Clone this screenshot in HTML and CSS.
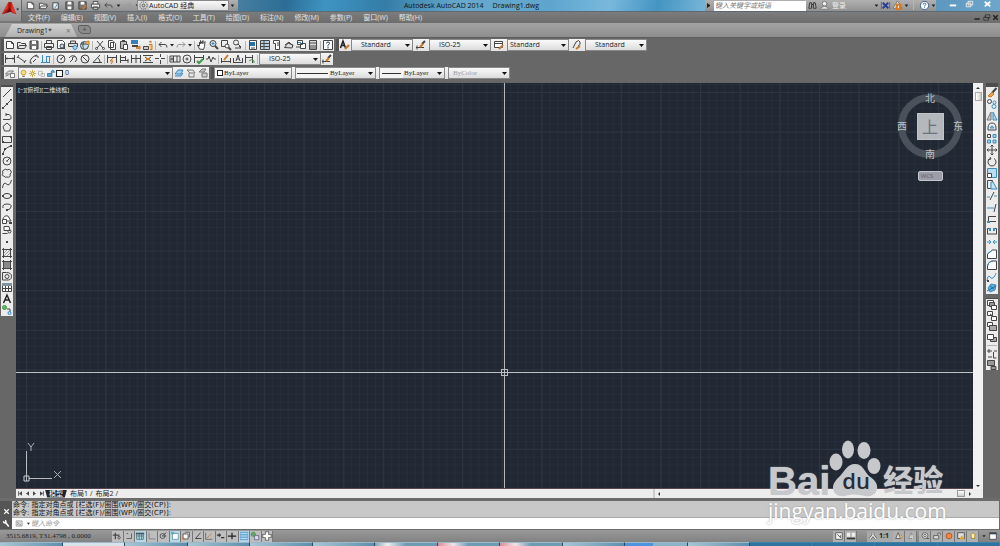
FILE: index.html
```html
<!DOCTYPE html>
<html>
<head>
<meta charset="utf-8">
<title>Autodesk AutoCAD 2014</title>
<link rel="stylesheet" href="styles.css">
</head>
<body>
<div class="app">
  <header class="header">
    <button class="app-button" aria-label="Application menu">
      <svg class="app-logo" viewBox="0 0 22 22"><path d="M2 15 9 2h3l5 13-5-2-3-3-3 4z" fill="#b3150f"/><path d="M9 2 8 9l-6 6zM12 2l5 13-5-3z" fill="#e2372c"/><path d="M6 14l4-6 2 4z" fill="#6e0806"/><path d="M17 9h3l-1.500 2z" fill="#222"/></svg>
    </button>
    <div class="titlebar">
      <div class="quick" data-icons="new open saveas save savep print undo dd redo dd"></div>
      <div class="workspace">
        <svg class="icon" viewBox="0 0 12 12"><circle cx="6" cy="6" r="4" fill="none" stroke="#555" stroke-dasharray="1.500 1"/><circle cx="6" cy="6" r="1.500" fill="none" stroke="#555"/></svg>
        <select class="select" aria-label="Workspace"><option>AutoCAD 经典</option></select>
      </div>
      <div class="quick-end" data-icons="dd"></div>
      <h1 class="title"><span>Autodesk AutoCAD 2014</span><span>Drawing1.dwg</span></h1>
      <div class="info">
        <span class="info-arrow"></span>
        <input class="search" type="text" aria-label="Search" placeholder="键入关键字或短语">
        <div class="strip" data-icons="binoculars user"></div>
        <button class="login">登录</button>
        <div class="strip" data-icons="dd exchange warn dd | help dd"></div>
      </div>
      <div class="window-buttons" data-icons="wmin wmax wclose"></div>
    </div>
    <nav class="menubar">
      <a href="#">文件(F)</a><a href="#">编辑(E)</a><a href="#">视图(V)</a><a href="#">插入(I)</a><a href="#">格式(O)</a><a href="#">工具(T)</a><a href="#">绘图(D)</a><a href="#">标注(N)</a><a href="#">修改(M)</a><a href="#">参数(P)</a><a href="#">窗口(W)</a><a href="#">帮助(H)</a>
      <div class="doc-buttons" data-icons="dmin dmax dclose"></div>
    </nav>
  </header>

  <div class="filetabs">
    <button class="filetab"><span>Drawing1*</span><span class="filetab-close">×</span></button>
    <button class="newtab" aria-label="New tab">+</button>
  </div>

  <div class="toolbars">
    <div class="toolrow">
      <div class="toolbar" data-icons="new open save | print preview publish globe | cut copy paste match block | undo dd redo dd | pan zoom zoomwin zoomprev | props center palette sheets markup calc | helpbox"></div>
      <div class="toolbar styles">
        <div class="strip" data-icons="textstyle"></div>
        <select class="select w62" aria-label="Text style"><option>Standard</option></select>
        <div class="strip wide" data-icons="dimstyle"></div>
        <select class="select w62" aria-label="Dimension style"><option>ISO-25</option></select>
        <div class="strip wide" data-icons="tablestyle"></div>
        <select class="select w62 near" aria-label="Table style"><option>Standard</option></select>
        <div class="strip wide" data-icons="leaderstyle"></div>
        <select class="select w62" aria-label="Leader style"><option>Standard</option></select>
      </div>
    </div>
    <div class="toolrow">
      <div class="toolbar">
        <div class="strip" data-icons="dlinear daligned darc dordinate | dradius djog ddiameter dangle | dquick dbase dcont dspace dbreak | tol centermark inspect jogline | dedit dtedit dupdate |"></div>
        <select class="select w62" aria-label="Current dimension style"><option>ISO-25</option></select>
        <div class="strip" data-icons="dimstyle"></div>
      </div>
    </div>
    <div class="toolrow">
      <div class="toolbar">
        <div class="strip" data-icons="layers"></div>
        <div class="layerbox">
          <div class="strip small" data-icons="bulb sun freeze lock swatch"></div>
          <select class="select plain" aria-label="Layer"><option>0</option></select>
        </div>
        <div class="strip" data-icons="laycur layprev laystate"></div>
      </div>
      <div class="toolbar properties">
        <div class="propbox w78"><span class="swatch"></span><select class="select plain serif" aria-label="Color"><option>ByLayer</option></select></div>
        <div class="propbox w81"><span class="sample long"></span><select class="select plain serif" aria-label="Linetype"><option>ByLayer</option></select></div>
        <div class="propbox w66"><span class="sample"></span><select class="select plain serif" aria-label="Lineweight"><option>ByLayer</option></select></div>
        <div class="propbox w62"><select class="select plain serif pale" aria-label="Plot style" disabled><option>ByColor</option></select></div>
      </div>
    </div>
  </div>

  <main class="workarea">
    <aside class="side left">
      <div class="vbar draw" data-icons="line xline pline polygon rect arc circle revcloud spline ellipse earc insert makeblock point hatch gradient region table text addsel"></div>
    </aside>
    <section class="document">
      <div class="model">
        <div class="canvas">
          <svg class="grid" aria-hidden="true">
            <defs>
              <pattern id="minor" x="10" y="9" width="7.930" height="7.930" patternUnits="userSpaceOnUse"><path d="M.5 0v8M0 .5h8" stroke="#252e39" fill="none"/></pattern>
              <pattern id="major" x="10" y="9" width="39.650" height="39.650" patternUnits="userSpaceOnUse"><path d="M.5 0v40M0 .5h40" stroke="#2c3540" fill="none"/></pattern>
            </defs>
            <rect width="100%" height="100%" fill="url(#minor)"/>
            <rect width="100%" height="100%" fill="url(#major)"/>
          </svg>
          <div class="viewlabel">[−][俯视][二维线框]</div>
          <div class="cross-v"></div>
          <div class="cross-h"></div>
          <div class="pickbox"></div>
          <svg class="ucs" viewBox="0 0 46 44"><path d="M6.500 9v30M9 36.500h23" stroke="#b9bdc1" fill="none"/><path d="M4 34h5v5H4z" stroke="#c9cdd0" fill="none"/><path d="M8 1l3 4 3-4M11 5v4M34 29l7 7M41 29l-7 7" stroke="#aeb2b7" fill="none"/></svg>
          <div class="cube">
            <svg class="ring" viewBox="0 0 70 70"><circle cx="35" cy="35" r="28.500" fill="none" stroke="#4b515b" stroke-width="7"/></svg>
            <span class="dir north">北</span><span class="dir west">西</span>
            <button class="face">上</button>
            <span class="dir east">东</span><span class="dir south">南</span>
          </div>
          <button class="wcs">WCS</button>
        </div>
        <div class="vscroll"><span class="up"></span><span class="thumb"></span><span class="down"></span></div>
      </div>
      <div class="layoutbar">
        <div class="navs" data-icons="first prev next last"></div>
        <button class="layout active">模型</button>
        <button class="layout">布局1</button><span>/</span>
        <button class="layout">布局2</button><span>/</span>
        <div class="hscroll"><span class="leftarrow"></span><span class="hthumb"></span><span class="rightarrow"></span></div>
      </div>
    </section>
    <aside class="side right">
      <div class="vbar modify" data-icons="erase copyobj mirror offset array move rotate scale stretch trim extend breakpt break join chamfer fillet blend explode"></div>
      <div class="vbar order" data-icons="front back above under | annofront hatchback"></div>
    </aside>
  </main>

  <section class="command">
    <div class="command-grip" data-icons="cclose wrench"></div>
    <div class="command-body">
      <div class="history"><p>命令: 指定对角点或 [栏选(F)/圈围(WP)/圈交(CP)]:</p><p>命令: 指定对角点或 [栏选(F)/圈围(WP)/圈交(CP)]:</p></div>
      <div class="prompt"><div class="strip" data-icons="prompt dd"></div><input class="prompt-input" type="text" aria-label="Command" placeholder="键入命令"></div>
    </div>
  </section>

  <footer class="status">
    <span class="coords">3515.6819, T31.4798 , 0.0000</span>
    <div class="toggles" data-icons="infer snap grid* ortho polar osnap* osnap3 otrack ducs dyn lwt tpy* qp sc"></div>
    <div class="status-right">
      <div class="strip boxed" data-icons="modelpaper quickview"></div>
      <div class="scale"><div class="strip" data-icons="anno"></div><select class="select plain bold" aria-label="Annotation scale"><option>1:1</option></select></div>
      <div class="strip boxed" data-icons="annovis annoauto"></div>
      <div class="strip boxed apart" data-icons="gear unlock hardware"></div>
      <div class="strip boxed" data-icons="tray lamp"></div>
      <div class="strip apart" data-icons="dd clean"></div>
    </div>
  </footer>
  <div class="taskbar"><i></i><i class="lit"></i><i></i><i></i><i></i><i></i><i class="app-light"></i><i class="app-red"></i><i class="app-red"></i><i></i><i class="app-blue"></i><i></i><i class="deep"></i><i class="deep"></i><i class="deep"></i><i class="deep"></i></div>

  <div class="brand" aria-hidden="true">
    <div class="brand-top">
      <span class="brand-bai">Bai</span>
      <div class="paw"><svg viewBox="0 0 52 58"><g fill="#c6c8cc"><ellipse cx="7" cy="22" rx="6.500" ry="8.500"/><ellipse cx="19" cy="9.500" rx="6" ry="9"/><ellipse cx="35" cy="10.500" rx="6.500" ry="8.500"/><ellipse cx="45" cy="26" rx="6.500" ry="8"/><path d="M26 24c8 0 9 7 14 12 6 4 9 8 8 13-1 6-7 8-12 7-7-2-14-2-20 0-6 1-12-2-12-8 0-5 3-8 7-12 5-5 7-12 15-12z"/></g></svg><span class="brand-du">du</span></div>
      <span class="brand-cn">经验</span>
    </div>
    <div class="brand-url">jingyan.baidu.com</div>
  </div>
</div>
<script src="icons.js"></script>
</body>
</html>
```

FILE: icons.js
```js
// Icon drawings on a 12 x 12 field: p strokes a path, s fills one, c draws a circle.
const K = '#454545', B = '#3b8dc2', O = '#c8792a', G = '#3e9a48';
const p = (d, c = K, f = 'none', w = 1) => `<path d="${d}" stroke="${c}" fill="${f}" stroke-width="${w}"/>`;
const s = (d, c = K) => `<path d="${d}" fill="${c}"/>`;
const c = (x, y, r, k = K, f = 'none') => `<circle cx="${x}" cy="${y}" r="${r}" stroke="${k}" fill="${f}"/>`;

const art = {
  new: p('M2.500 2.500h5l2 2v5h-7zM7.500 2.500v2h2', K, '#fff'),
  open: p('M1.500 9.500v-6h3l1 1h4v2M1.500 9.500l2-3h7l-2 3z', K, '#e8e8e8'),
  save: p('M2 2h8v8H2z', K, '#777') + s('M4 2h4v3H4zM4 7h4v3H4z', '#fff'),
  saveas: p('M2 3h6v7H2z', K, '#eee') + p('M4 9l4-6', B),
  savep: p('M2 2h8v8H2z', K, '#777') + s('M4 2h4v3H4z', '#fff') + p('M6 10l4-4', O, 'none', 2),
  print: p('M3.500 4V1.500h5V4M1.500 4.500h9v4h-9zM3.500 7.500h5v3h-5z', K, '#eee'),
  preview: p('M2.500 1.500h5l2 2v6h-7z', K, '#fff') + c(7, 7, 2, K, '#cde') + p('M8.500 8.500l2 2'),
  publish: p('M3.500 4V2h5v2M1.500 4.500h9v3h-9z', K, '#ddd') + c(8, 8.5, 2, B, '#a9d3ea'),
  globe: c(5.5, 6.5, 4, K, '#bfe0ee') + p('M2 5h7M5 3c-2 3-1 5 0 7') + p('M6 3l4-1v4', O, '#f0c34e'),
  cut: p('M3 2l6 7M9 2L3 9') + c(2.5, 9.5, 1) + c(9.5, 9.5, 1),
  copy: p('M2.500 1.500h4l1 1v6h-5zM4.500 3.500h4l1 1v6h-5z', K, '#fff'),
  paste: p('M2.500 2.500h6v7h-6zM4 1.500h3', K, '#bbb') + p('M5.500 5.500h4v5h-4z', K, '#fff'),
  match: s('M1 1h7v4H1z', '#397ebc') + p('M2 7h6', K, 'none', 2) + p('M6 9l4-2v3z', O, '#e0a25c'),
  block: p('M1.500 7.500h5v3h-5z', K, '#ccc') + p('M7 5.500h3v5H8M7 3l2-1v2', O, '#f4c978'),
  undo: p('M4.500 3L2 5.500 4.500 8M2 5.500h6q2 0 2 3'),
  redo: p('M7.500 3L10 5.500 7.500 8M10 5.500H4q-2 0-2 3', '#999'),
  dd: s('M4 5h4L6 7.500z', '#222'),
  pan: p('M3.500 10L1.500 6l2 1V3l1 2V1.500l1.500 3 1-3v3l2-2-.5 5-1 3z', K, '#fff'),
  zoom: c(5, 4.5, 3, K, '#dbe8ee') + p('M7 7l3 3', K, 'none', 2) + p('M5 3v3M3.500 4.500h3', B),
  zoomwin: p('M1.500 1.500h6v6h-6z') + c(7, 7, 2, K, '#fff') + p('M8.500 8.500L11 11', K, 'none', 2),
  zoomprev: c(4, 3.5, 2.5) + p('M6 5l3 3M3 9h6M9 9l-2-2', K),
  props: p('M2.500 1.500h7v9h-7z', K, '#fff') + s('M3 3h5v4H3z', '#286fae') + p('M4 9h4'),
  center: p('M1.500 1.500h9v9h-9z', K, '#b9d4e6') + p('M2 4.500h8M5 2v8M2 7.500h8'),
  palette: p('M2.500 1.500h6v9h-4v-6h-2z', K, '#fff') + p('M6 4h2M6 6h2'),
  sheets: p('M1.500 8.500L5 4l5 2-1 3zM2 6l4-3 4 4', K, '#ddd'),
  markup: p('M2.500 1.500h5v4h-5zM5.500 4.500h5v5h-5zM1 8h4', K, '#fff') + p('M3 3.500h3', B),
  calc: p('M2.500 1.500h7v9h-7z', K, '#ddd') + p('M3 4h6M4 6v4M6 6v4M8 6v4'),
  helpbox: p('M1.500 1.500h9v9h-9z', K, '#fff') + p('M4.500 4.500q0-1.500 1.500-1.500t1.500 1.500L6 6.500v1M6 8v1.500', '#246'),
  textstyle: p('M1.500 9L4 2l2.500 7M2.500 6.500h3', '#222', 'none', 1.5) + p('M6 10l4-4', O, 'none', 2),
  dimstyle: p('M1 8.500h8M2 6.500v4', K) + p('M7 5l3-3', K, 'none', 2) + p('M5 8l3-3', O, 'none', 2),
  tablestyle: p('M1.500 2.500h8v6h-8zM1.500 4.500h8', K, '#fff') + p('M6 10l4-4', O, 'none', 2),
  leaderstyle: p('M2 9L5 3q3-3 4 0t-2 4', K) + p('M5 10l4-3', O, 'none', 2),
  dlinear: p('M1.500 2v8M10.500 2v8M2 5.500h8M3 4.500v2M9 4.500v2'),
  daligned: p('M2 4l7 5M1 5l2-3M8 10l2-3'), darc: p('M2 10q0-6 7-8M2 10h2M7 3h3v2M5 9l3-3'),
  dordinate: p('M2.500 2v7M1 9.500h9M6.500 3v6M6.500 3.500h4M9.500 3v6', B),
  dradius: c(6, 6, 4) + p('M6 6l3-3M6 5v2'), djog: p('M2 5q3-4 7-1 2 3-1 5M3 9l3-3-1-1 3-2'),
  ddiameter: c(6, 6, 4) + p('M3 3l6 6'), dangle: p('M9 2L2 9.500h9M7 5q2 2 2 4'),
  dquick: p('M1.500 2v8M10.500 2v8M2 4.500h8') + p('M7 5L4 8h3l-2 3', O, '#f2c352'),
  dbase: p('M2.500 2v8M3 4.500h4M7.500 3v4M3 7.500h7M10 6v4'), dcont: p('M1.500 2v8M6 2v8M10.500 2v8M2 5.500h8'),
  dspace: p('M1 2.500h10M1 9.500h10M3 4l6 4M9 4L3 8') + s('M4 5h4v2H4z', O), dbreak: p('M6.500 1v3M6.500 7v4M1 5.500h4M7 5.500h4'),
  tol: p('M1 3h10v6H1zM4.500 3v6M8 3v6') + c(3, 6, 1), centermark: c(6, 6, 4) + p('M6 4.500v3M4.500 6h3'),
  inspect: p('M1.500 2v8M10.500 2v5M2 4.500h8') + p('M4 8l2 2 4-4', G, 'none', 2), jogline: p('M1 6h2l1-3 2 6 2-5 1 2h2'),
  dedit: p('M1.500 5v5M10.500 5v5M2 8.500h8') + p('M4 7l4-5', O, 'none', 2), dtedit: p('M1.500 5v5M10.500 5v5M2 9.500h8M4 8l2-6 2 6M5 6h2'),
  dupdate: p('M1.500 2v8M8.500 2v8M2 4.500h6') + p('M5 8q3-3 5 0v2', G),
  layers: p('M1.500 7l3-3h5l-3 3zM1.500 9l3-1', '#777', '#ddd') + p('M6.500 6.500h4v4h-4z', '#777', '#fff'),
  bulb: p('M4 7q-2-2-1-4 3-3 6 0 1 2-1 4v1H4z', '#a98a22', '#f7e27a') + p('M4.500 10h3'),
  sun: p('M6 1v10M1 6h10M2.500 2.500l7 7M9.500 2.500l-7 7', '#c79b2a') + c(6, 6, 2, '#b98a20', '#fbe78b'),
  freeze: p('M2 3h5v5H2zM5 6h5v4H5', '#aaa'), lock: p('M2 6h6v4H2zM7 6V3q2-3 4 0v2', '#2c6d9d', '#5aa4d1'),
  swatch: p('M2 2h8v8H2z', '#222', '#fff', 1.5),
  laycur: p('M2 7l3-4h5L8 7zM2 9l6 0 2-3', B, '#a9cde4'), layprev: p('M2 3h6l2 3H5zM4 6v4h5V7', '#777'), laystate: p('M2 5l3-3h4L7 5zM5 6h5v4H5z', '#777', '#ccc'),
  line: p('M2 10l8-8'), xline: p('M2 10l8-8') + s('M1 9h2v2H1zM5 5h2v2H5zM9 1h2v2H9z'), pline: p('M2 9.500h6q3 0 2-3t-5-2M5 3v3'),
  polygon: p('M6 2l4 3.500-1.500 4.500h-5L2 5.500z'), rect: p('M1.500 3.500h9v6h-9z') + s('M1 8h2v2H1zM9 3h2v2H9z'),
  arc: p('M2 10q1-6 8-8') + s('M1 9h2v2H1zM3 4h2v2H3zM9 1h2v2H9z'), circle: c(6, 6, 4) + p('M6 6l3-3M5 6h2'),
  revcloud: p('M3 3q2-2 3 0 3-2 4 1 1 2-1 3 1 4-3 3-2 1-3-1-3 0-1-3-2-2 1-3z'), spline: p('M1.500 10q1-7 4-4t5-4'),
  ellipse: '<ellipse cx="6" cy="6" rx="4" ry="2.500" fill="none" stroke="#454545"/>' + s('M1 5h2v2H1zM9 5h2v2H9zM5 3h2v1H5z'),
  earc: p('M2 7q-1-4 4-4t4 3-4 3') + s('M5 8h2v2H5z'), insert: p('M2 6q1-4 5-3l3 5H5M1.500 6.500h4v4h-4z', K, '#fff') + s('M8 9h3v2H8z'),
  makeblock: p('M3 2.500h5l1 4H3zM1.500 9.500h5', K, '#fff') + c(8.5, 7.5, 1.5), point: s('M5 5h2v2H5z'),
  hatch: p('M2.500 1v10M9.500 1v10M1 2.500h10M1 9.500h10') + p('M3 9l6-6M3 6l3-3M6 9l3-3', '#999'),
  gradient: p('M2.500 1v10M9.500 1v10M1 2.500h10M1 9.500h10') + s('M3 3h6v6H3z', '#888'),
  region: p('M1.500 2.500h4q5 0 5 4t-5 3.500h-4z') + c(6, 6.5, 2), table: p('M1.500 2.500h9v8h-9zM4.500 3v7M7.500 3v7M2 7.500h8', K, '#fff') + s('M1 2h10v3H1z', '#8294a0'),
  text: p('M2.500 10L6 2l3.500 8M3.500 7h5', '#222', 'none', 1.5), addsel: c(3.5, 3.5, 2, G, '#62b96a') + p('M6 5h3v3', K) + c(8.5, 9, 1.5, B, '#bfe2f2'),
  erase: p('M10.500 1L6 6', K, 'none', 2) + p('M6 5L2 9l3 1 3-3z', O, '#e7a253'),
  copyobj: c(3.5, 3.5, 2) + c(8.5, 4.5, 1.5, B) + c(8, 8.5, 2, B), mirror: p('M5 2v8H1z', '#777', '#ccc') + p('M7 2v8h4z', B, '#b5d8ec'),
  offset: p('M2 7q0-5 4-5t4 5v2H2z', K) + p('M4 7q2-4 4 0z', B, '#a5d0ea'), array: p('M1.500 1.500h3v3h-3z') + p('M7 1.500h3v3H7zM1.500 7h3v3h-3zM7 7h3v3H7z', B, '#a5d0ea'),
  move: p('M6 1v10M1 6h10M4.500 2.500L6 1l1.500 1.500M4.500 9.500L6 11l1.500-1.500M2.500 4.500L1 6l1.500 1.500M9.500 4.500L11 6 9.500 7.500'),
  rotate: p('M8 2.500A4 4 0 1 1 4 2.500M4 1l1 2-3 1'), scale: p('M1.500 1.500h9v9h-9z', B, '#b9def1') + p('M1.500 6.500h4v4h-4z', K, '#fff'),
  stretch: p('M1.500 1.500h5v8h-5z') + p('M5 3h2l4 7H5z', B, '#c6e3f3'), trim: p('M1 7h3M8 6h3', B) + p('M4 10l4-8'), extend: p('M1 6h7', B) + p('M8 10l2-8'),
  breakpt: p('M10 3.500H2.500v5H10', K) + s('M1 8h3v2H1z', B), break: p('M1.500 9.500v-6h3M10.500 9.500v-6h-3M2 9h8', K) + s('M3 3h2v3H3zM7 3h2v3H7z', B),
  join: p('M1 6h4M7 6h4M3 4l2 2-2 2M9 4L7 6l2 2', B), chamfer: p('M1.500 10.500V6l5-4h4v8.500z', K, '#fff') + p('M1.500 6l5-4', B),
  fillet: p('M1.500 10.500V7q1-5 6-5h3v8.500z', K, '#fff') + p('M1.500 7q1-5 6-5', B), blend: p('M1 10q1-7 3-4t4 0 2-4', B) + s('M1 9h2v2H1z'),
  explode: p('M2 6l3-4 5 1-1 5-5 2z', B, '#5db0db') + p('M1 9l9-5M4 4l4 3', '#246e9f'),
  front: p('M1.500 1.500h6v5h-6z', K, '#fff') + p('M3.500 3.500h5v4h-5z', K, '#999') + p('M5.500 6.500h5v4h-5z', K, '#fff'),
  back: p('M1.500 1.500h5v4h-5zM5.500 6.500h5v4h-5z', K, '#fff') + p('M4 4l4 3'),
  above: p('M1.500 1.500h5v4h-5z', K, '#fff') + p('M3.500 4.500h7v5h-7z', K, '#aaa'), under: p('M4.500 5.500h6v4h-6z', K, '#aaa') + p('M1.500 2.500h6v5h-6z', K, '#fff'),
  annofront: p('M1 3h5M3 1v4M7.500 4v6h3M2 9h4M8 3h3', K), hatchback: p('M1.500 1.500h7v5h-7zM5 7.500h5v3H5z', K, '#999'),
  first: p('M3.500 3v6', '#333') + s('M8 3v6L4 6z'), prev: s('M8 3v6L4 6z'), next: s('M4 3v6l4-3z'), last: s('M4 3v6l4-3z') + p('M8.500 3v6', '#333'),
  cclose: p('M3 3l6 6M9 3L3 9', '#fff', 'none', 1.5), wrench: p('M2 3q0 3 3 2l4 5M5 5q1-2-1-3', '#fff', 'none', 2),
  prompt: p('M1.500 2.500h8v7h-8z', '#999', '#ddd') + p('M3 4l2 2-2 2M6 8h2', '#668'),
  binoculars: p('M2 9l1-6h2v6zM7 9V3h2l1 6zM5 5h2', '#333', '#aaa'), user: c(6, 4, 2.5, '#777', '#eee') + p('M1.500 10q1-3 4.500-3t4.500 3z', '#777', '#eee'),
  exchange: p('M3 3l6 6M9 3L3 9', '#263f96', 'none', 2) + p('M1.500 2v8M10.500 2v8', '#56659a'), warn: p('M6 1l5 8H1z', '#777', '#eee') + s('M4 4h6v7H4z', '#d87722') + p('M7 6v3', '#fff'),
  help: c(6, 6, 4.5, '#345988', '#fff') + p('M4.500 5q0-1.500 1.500-1.500T7.500 5L6 6.500v.5M6 8v1', '#245699'),
  wmin: s('M3 6h7v2H3z', '#fff'), wmax: p('M4.500 2.500h5v4h-5zM2.500 4.500h5v4h-5z', '#eee', '#819aac'), wclose: p('M3 3l6 5M9 3L3 8', '#fff', 'none', 2),
  dmin: p('M2 8h7', '#222', 'none', 2), dmax: p('M4.500 2.500h6v4h-6zM2.500 5.500h6v4h-6z', '#222', '#888'), dclose: p('M3 3l6 6M9 3L3 9', '#222', 'none', 2),
  infer: p('M4 2v8M1 5h8', '#444', 'none', 1.5) + c(8.5, 8, 1.5), snap: p('M3 9h6V3M3 3h2', '#555'), grid: p('M2 3h8v7H2zM5 3v7M8 3v7M2 6h8', '#477') + s('M1 2h10v2H1z', '#456'),
  ortho: p('M2.500 2v7.500H10', '#777'), polar: c(5.5, 6, 3) + p('M5 6l5-4M5 6h5'), osnap: p('M3 3h7v7H3z', '#69a', '#fff') + s('M1 1h4v3H1z', '#68a8c6'),
  osnap3: p('M2.500 3.500h6v6h-6zM5 1.500h5v6', K, '#fff') + s('M1 8h3v2H1z', O), otrack: p('M9 2L3 9h7', '#333'), ducs: p('M2 2v8h8', '#666') + p('M3 9l6-6', O),
  dyn: p('M1 5h5M4 3v4M6 8h4', '#333', 'none', 1.5), lwt: p('M1 6h10M6 2v8', '#222', 'none', 1.5), tpy: s('M1 1h10v10H1z', '#69aada') + p('M2 3h8M2 6h8M2 9h8', '#cfe6f4', 'none', 1),
  qp: c(4, 4, 2.5, G, '#61a866') + p('M5.500 5.500h5v5h-5z', '#668', '#dde'), sc: p('M6 .5v11M.5 6h11', '#555', 'none', 5) + p('M6 1.500v9M1.500 6h9', '#fff', 'none', 3),
  modelpaper: p('M2 2h8v8H2z', '#555', '#eee') + p('M4 4l4 4M8 5v3'), quickview: s('M1 2h4v5H1zM7 2h4v5H7z', '#eee') + p('M1 9h10', '#333', 'none', 2),
  anno: p('M6 1.500v4M6 5l-4 5M6 5l4 5', '#555', 'none', 3) + p('M6 1.500v4M6 5l-4 5M6 5l4 5', '#eee', 'none', 1.5),
  annovis: p('M5 2L2 9h6z', '#555', '#ddd') + p('M8 4l2 3-2 3', O, '#ffd65a'), annoauto: p('M6 2L3 9h6z', '#888', '#ccc') + p('M8 5v5', '#ddd'),
  gear: c(6, 5.5, 3.5, '#555', '#eee') + c(6, 5.5, 1.5, '#555') + p('M8 9h3'), unlock: p('M2 5.500h6v4H2zM7 5V2.500h3V5', '#555', '#ddd'), hardware: c(6, 6, 3.5, '#b54d1c', '#f08743'),
  tray: p('M2 2h8v7H2z', '#444', '#ddd') + s('M7 5l3 5H4z', '#e4a52c'), lamp: p('M4 7q-2-3 2-5 4 2 2 5v2H4z', '#a77a30', '#fff1a6'), clean: p('M2 2h8v8H2z', '#444', '#fff') + s('M2 2h8v2H2z', '#345')
};

document.querySelectorAll('[data-icons]').forEach(bar => {
  bar.insertAdjacentHTML('beforeend', bar.dataset.icons.split(' ').map(key => {
    if (key === '|') return '<span class="sep"></span>';
    const on = key.endsWith('*'), name = on ? key.slice(0, -1) : key;
    return `<button class="tool${name === 'dd' ? ' drop' : ''}${on ? ' on' : ''}" aria-label="${name}"><svg class="icon" viewBox="0 0 12 12">${art[name]}</svg></button>`;
  }).join(''));
});
```

FILE: styles.css
```css
* { box-sizing: border-box; }
body { margin: 0; background: #676767; font: 7px/10px "Open Sans", "Noto Sans CJK SC", sans-serif; color: #222; }
button, input, select { font: inherit; color: inherit; margin: 0; padding: 0; border: 0; background: none; border-radius: 0; }
p, h1 { margin: 0; }
.app { position: relative; display: flex; flex-direction: column; height: 100vh; overflow: hidden; }
.icon { display: block; width: 12px; height: 12px; flex: none; }
.tool { display: flex; align-items: center; justify-content: center; width: 12px; height: 100%; flex: none; }
.tool.drop { width: 6px; }
.strip, .quick, .quick-end, .toolbar, .window-buttons, .doc-buttons, .navs { display: flex; align-items: center; }
.sep { width: 1px; height: 9px; margin: 0 1px; background: #b5b5b5; flex: none; }
.select { appearance: none; height: 12px; padding: 0 8px 0 9px; line-height: 10px; border: 1px solid #888; background: url("data:image/svg+xml,%3Csvg xmlns='http://www.w3.org/2000/svg' width='5' height='3'%3E%3Cpath d='M0 0h5L2.5 3z' fill='%23111'/%3E%3C/svg%3E") right 2px center no-repeat, linear-gradient(#fafafa, #dcdcdc); }

/* header */
.header { display: grid; grid-template-columns: 22px 1fr; grid-template-rows: 12px 11px; flex: none; background: linear-gradient(#8c8c8c, #6d6d6d); }
.app-button { grid-row: 1 / 3; background: linear-gradient(#b5b5b5, #8e8e8e); border-right: 1px solid #666; border-bottom: 2px solid #777; }
.app-logo { display: block; width: 21px; height: 21px; }
.titlebar { display: flex; align-items: stretch; min-width: 0; background: linear-gradient(100deg, #477f9f 22%, #2c6d96 27%, #3e94c2 31%, #347da8 37%, #68a9cc 45%, #5ea5ce 54%, #79b8dc 60%, #4494c2 65%, #79b6d8 70%, #548fb8 90%, #6fa7cc); border-bottom: 1px solid #5b6a74; }
.titlebar .icon { width: 11px; height: 11px; }
.quick, .quick-end, .info { background: linear-gradient(#b0b0b0, #929292); }
.quick { padding-left: 2px; width: 115px; }
.quick .tool { width: 13px; }
.quick .tool.drop { width: 6px; }
.workspace { display: flex; align-items: center; width: 92px; border: 1px solid #888; background: linear-gradient(#ddd, #c3c3c3); }
.workspace .select { flex: 1; height: 9px; padding-left: 0; border: 0; line-height: 9px; }
.quick-end { width: 9px; }
.title { display: flex; flex: 1; justify-content: center; gap: 9px; font-size: 7px; line-height: 11px; font-weight: 500; color: #111; }
.info { display: flex; align-items: center; width: 231px; }
.info-arrow { width: 7px; height: 5px; border-left: 3px solid #222; border-top: 2px solid transparent; border-bottom: 2px solid transparent; margin-left: 2px; }
.search { width: 92px; height: 10px; background: #fff; padding-left: 1px; font-style: italic; }
.search::placeholder { color: #777; opacity: 1; }
.info .login { color: #eee; margin-right: auto; padding-left: 2px; }
.info .sep { margin: 0 4px; }
.window-buttons { width: 64px; justify-content: space-around; padding: 0 4px 2px 8px; }
.menubar { display: flex; align-items: center; gap: 11px; padding-left: 6px; }
.menubar a { color: #e4e4e4; text-decoration: none; line-height: 10px; }
.doc-buttons { margin-left: auto; height: 11px; }
.doc-buttons .tool { width: 9px; }
.doc-buttons .icon { width: 9px; height: 9px; }

/* file tabs */
.filetabs { display: flex; align-items: flex-end; flex: none; height: 15px; padding-left: 5px; background: linear-gradient(#a3a3a3, #8e8e8e); border-bottom: 1px solid #5d5d5d; }
.filetab { display: flex; justify-content: space-between; align-items: center; width: 72px; height: 13px; padding: 0 6px 0 12px; background: linear-gradient(#d2d2d2, #b1b1b1); clip-path: polygon(0 100%, 7px 0, 66px 0, 100% 100%); }
.filetab-close { color: #777; font-size: 9px; }
.newtab { width: 13px; height: 9px; margin: 0 0 3px 1px; border: 1px solid #5f5f5f; border-radius: 2px 4px 2px 5px; background: #8a8a8a; color: #444; line-height: 7px; }

/* toolbars */
.toolbars { display: flex; flex-direction: column; gap: 2px; flex: none; padding: 1px 0 4px 1px; }
.toolrow { display: flex; gap: 2px; height: 12px; }
.toolbar { height: 12px; background: linear-gradient(#f4f4f4, #e2e2e2); border-left: 3px solid #555; flex: none; }
.toolbar .sep { margin: 0 1px; }
.toolbar.properties { gap: 3px; }
.wide { padding: 0 2px 0 2px; }
.w62 { width: 62px; }
.w66 { width: 66px; }
.w78 { width: 78px; }
.w81 { width: 81px; }
.near { padding-left: 2px; }
.layerbox, .propbox { display: flex; align-items: center; height: 12px; border: 1px solid #888; background: #f4f4f4; }
.layerbox { width: 155px; margin-left: 2px; }
.small .tool { width: 9px; }
.small .icon { width: 9px; height: 9px; }
.select.plain { flex: 1; min-width: 0; height: 10px; border: 0; padding-left: 1px; }
.serif { font-family: "Liberation Serif", serif; }
.propbox .pale { padding-left: 4px; color: #999; opacity: 1; }
.swatch { width: 6px; height: 6px; margin-left: 2px; border: 1px solid #222; background: #fff; }
.sample { width: 19px; height: 1px; margin: 0 2px; background: #333; }
.sample.long { width: 31px; margin: 0 1px; }

/* work area */
.workarea { display: flex; flex: 1; min-height: 0; }
.side { display: flex; flex-direction: column; align-items: center; gap: 4px; flex: none; }
.left { width: 16px; padding: 2px 3px 0 0; }
.right { width: 17px; padding-left: 1px; }
.vbar { display: flex; flex-direction: column; align-items: center; width: 12px; border-top: 2px solid #4c4c4c; background: #ececec; }
.vbar .tool { flex: 1; height: auto; min-height: 0; }
.vbar .sep { width: 10px; height: 1px; margin: 2px 0; }
.draw { height: 231px; }
.modify { height: 211px; border-top-width: 4px; }
.order { height: 72px; border-top-width: 1px; }
.document { display: flex; flex-direction: column; flex: 1; min-width: 0; }
.model { display: flex; flex: 1; min-height: 0; }
.canvas { position: relative; flex: 1; overflow: hidden; background: #212833; border-bottom: 1px solid #594650; }
.grid { position: absolute; inset: 0; width: 100%; height: 100%; }
.viewlabel { position: absolute; left: 2px; top: 2px; color: #e2e2e2; font-size: 6px; }
.cross-v { position: absolute; left: 51%; top: 0; bottom: 0; width: 1px; background: #b5b5ba; }
.cross-h { position: absolute; top: 289px; left: 0; right: 0; height: 1px; background: #bfc3c3; }
.pickbox { position: absolute; left: 51%; top: 286px; width: 7px; height: 7px; margin-left: -3px; border: 1px solid #b5bfb5; }
.ucs { position: absolute; left: 4px; bottom: 2px; width: 46px; height: 44px; }
.cube { position: absolute; right: 8px; top: 8px; width: 70px; height: 70px; display: grid; grid-template: 14px 1fr 14px / 14px 1fr 14px; place-items: center; font: 10px/12px "Noto Sans CJK SC", sans-serif; color: #bfc2c6; }
.ring { position: absolute; inset: 0; width: 100%; height: 100%; }
.dir { position: relative; }
.north, .south { grid-column: 2; }
.north { grid-row: 1; }
.south { grid-row: 3; }
.west, .east, .face { grid-row: 2; }
.face { position: relative; width: 27px; height: 27px; background: #b4b7bc; color: #6a7280; font: 16px/24px "Noto Sans CJK SC", sans-serif; border: 1px solid #c2c5c8; }
.wcs { position: absolute; right: 30px; top: 88px; width: 25px; height: 10px; padding-right: 7px; border-radius: 2px; border: 1px solid #c5c6d0; background: #9b9da9; color: #5d606d; font-size: 6px; line-height: 8px; }
.vscroll { display: flex; flex-direction: column; align-items: center; width: 10px; background: #f1f1f1; }
.up, .down { border: 2px solid transparent; }
.up { border-bottom-color: #333; margin-top: 2px; }
.down { border-top-color: #333; margin-top: auto; }
.thumb { width: 7px; height: 9px; margin-top: 3px; border: 1px solid #aaa; background: linear-gradient(90deg, #fff, #ccc); }
.layoutbar { display: flex; align-items: center; flex: none; height: 9px; background: #ededed; line-height: 8px; }
.navs { padding-left: 1px; }
.navs .tool { width: 7px; }
.navs .icon { width: 9px; height: 9px; }
.layout { padding: 0 2px 0 3px; line-height: 8px; }
.layout.active { padding: 0 4px; background: #20262f; color: #fff; clip-path: polygon(0 0, 100% 0, 90% 100%, 10% 100%); }
.hscroll { display: flex; align-items: center; width: 330px; height: 9px; margin-left: auto; border-left: 2px solid #ccc; }
.leftarrow, .rightarrow { border: 2px solid transparent; }
.leftarrow { border-right-color: #333; margin-left: 1px; }
.rightarrow { border-left-color: #333; margin: 0 10px 0 4px; }
.hthumb { width: 8px; height: 7px; margin-left: auto; border: 1px solid #999; background: linear-gradient(#fff, #ccc); }

/* command line */
.command { display: flex; flex: none; padding: 3px 1px 1px 0; background: #6c6c6c; }
.command-grip { display: flex; flex-direction: column; justify-content: space-around; width: 12px; padding-top: 4px; background: #555; }
.command-grip .tool { height: 11px; }
.command-grip .icon { width: 9px; height: 9px; }
.command-body { flex: 1; min-width: 0; }
.history { height: 17px; padding-left: 1px; background: #c8c8c8; border-bottom: 1px solid #aaa; font-family: "DejaVu Sans", "Noto Sans CJK SC", sans-serif; line-height: 8px; color: #111; }
.prompt { display: flex; align-items: center; height: 11px; padding-left: 1px; background: #fff; }
.prompt .icon { width: 9px; height: 9px; }
.prompt-input { flex: 1; height: 10px; font-style: italic; }
.prompt-input::placeholder { color: #999; opacity: 1; }

/* status bar */
.status { display: flex; align-items: center; flex: none; height: 12px; padding-right: 1px; background: linear-gradient(#999, #828282); }
.coords { width: 112px; padding-left: 6px; font-family: "Liberation Serif", serif; white-space: pre; }
.toggles { display: flex; width: 161px; height: 11px; }
.toggles .tool { flex: 1; border-right: 1px solid #777; background: #bebebe; }
.toggles .tool.on { background: #b9d8e6; }
.toggles .icon, .status-right .icon { width: 10px; height: 10px; }
.status-right { display: flex; align-items: center; height: 11px; margin-left: auto; }
.boxed .tool { height: 11px; background: #b0b0b0; border-right: 1px solid #777; }
.apart { margin-left: 2px; }
.scale { display: flex; align-items: center; margin-left: 10px; width: 26px; height: 11px; background: #a9a9a9; }
.scale .select { padding: 0; background: none; }
.bold { font-weight: 700; }
.taskbar { display: flex; flex: none; height: 4px; background: #2d6385; }
.taskbar i { flex: 1; border-top: 1px solid #9bb9c9; border-right: 1px solid #2c4a5d; background: linear-gradient(90deg, #a9c6d4, #5c8fae); }
.taskbar .lit { background: #d8e2e8; }
.taskbar .app-light { background: linear-gradient(90deg, #7fa5b9, #eee 20%, #6c9bb4 50%); }
.taskbar .app-red { background: linear-gradient(90deg, #d98e96, #f0e4e6 25%, #6c9bb4 50%); }
.taskbar .app-blue { background: linear-gradient(90deg, #4d94e0 45%, #8cb3c8 45%); }
.taskbar .deep { border-color: #4182aa; background: #2f749e; }

/* brand overlay */
.brand { position: absolute; right: 54px; bottom: 22px; width: 178px; color: #c6c8cc; }
.brand-top { display: flex; align-items: flex-end; font: 700 40px/34px "Liberation Sans", sans-serif; text-shadow: 0 0 1px #e5e5e5; }
.paw { position: relative; width: 52px; height: 58px; margin-left: -1px; }
.paw svg { display: block; width: 52px; height: 58px; }
.brand-du { position: absolute; left: 13px; bottom: 8px; font: 600 22px/20px "Open Sans", sans-serif; color: #272e39; text-shadow: none; }
.brand-cn { margin-left: 2px; font: 700 30px/40px "Noto Sans CJK SC", sans-serif; }
.brand-url { font: 21px/26px "Open Sans", sans-serif; color: #fff; text-shadow: 0 0 2px #999; }
```
